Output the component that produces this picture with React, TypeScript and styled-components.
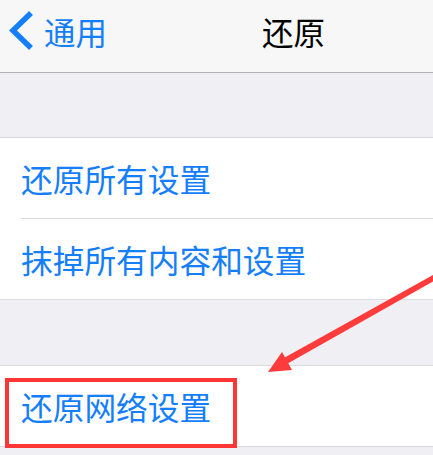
import styled, { createGlobalStyle } from 'styled-components'

const GlobalStyle = createGlobalStyle`
    html, body {
        margin: 0;
        padding: 0;
        background-color: #efeff4;
        font-family: "Noto Sans CJK SC", "Noto Sans", sans-serif;
    }
`

const Screen = styled.div`
    width: 433px;
    height: 455px;
    overflow: hidden;
    background-color: #efeff4;
    position: relative;
`

const NavBar = styled.header`
    height: 62px;
    padding-bottom: 10px;
    display: flex;
    align-items: center;
    background-color: #f7f7f7;
    border-bottom: 1px solid #b2b2b2;
`

const BackButton = styled.button`
    display: flex;
    align-items: center;
    gap: 10px;
    padding: 0 0 0 8px;
    border: none;
    background: none;
    color: #157efb;
    font-family: inherit;
    font-size: 31.5px;
    line-height: 31px;
    cursor: pointer;
`

const Title = styled.h1`
    margin: 0 0 0 155px;
    font-size: 31.5px;
    line-height: 31px;
    font-weight: 400;
    color: #000;
`

const Spacer = styled.div<{ $height: number }>`
    height: ${(p) => p.$height}px;
`

const Group = styled.section`
    background-color: #fff;
    border-top: 1px solid #dcdce0;
    border-bottom: 1px solid #dcdce0;
`

const Row = styled.div<{ $separator?: boolean }>`
    position: relative;
    height: 80px;
    display: flex;
    align-items: center;
    color: #157efb;
    font-size: 31.7px;
    line-height: 31px;
    border-top: ${(p) => (p.$separator ? '1px solid #dcdce0' : 'none')};
    margin-left: ${(p) => (p.$separator ? '21px' : '0')};
    padding-left: ${(p) => (p.$separator ? '0' : '21px')};
`

const Highlight = styled.div`
    position: absolute;
    left: 5px;
    top: 12px;
    width: 224px;
    height: 62px;
    border: 4px solid #ff3636;
    pointer-events: none;
`

const Arrow = styled.svg`
    position: absolute;
    left: 0;
    top: 0;
    pointer-events: none;
`

const Chevron = () => (
    <svg width='26' height='42' viewBox='0 0 26 42'>
        <polyline points='23,3 5,20.5 23,38' fill='none' stroke='#157efb' strokeWidth='5.5' />
    </svg>
)

const App = () => {
    return (
        <Screen>
            <GlobalStyle />
            <NavBar>
                <BackButton>
                    <Chevron />
                    <span>通用</span>
                </BackButton>
                <Title>还原</Title>
            </NavBar>
            <Spacer $height={64} />
            <Group>
                <Row>还原所有设置</Row>
                <Row $separator>抹掉所有内容和设置</Row>
            </Group>
            <Spacer $height={65} />
            <Group>
                <Row>
                    还原网络设置
                    <Highlight />
                </Row>
            </Group>
            <Arrow width='433' height='455' viewBox='0 0 433 455'>
                <polygon points='440,271 441,277 285,365 282,359' fill='#ff3b3b' />
                <polygon points='268,372 282,352 292,370' fill='#ff3b3b' />
            </Arrow>
        </Screen>
    )
}

export default App
